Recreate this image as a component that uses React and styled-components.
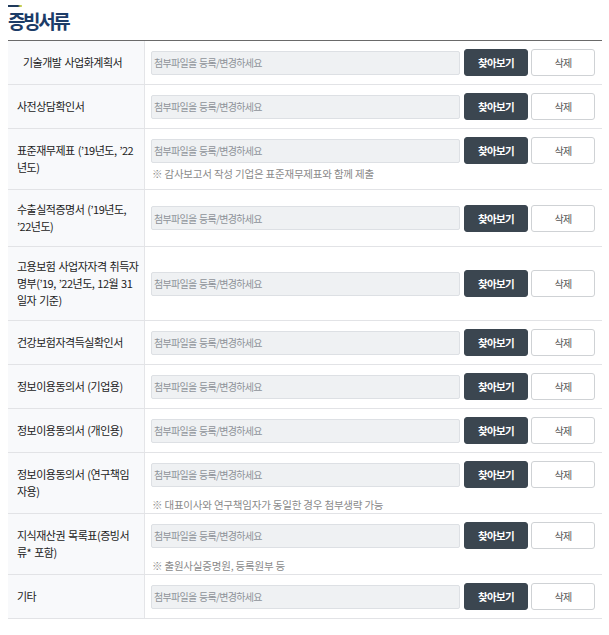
import React from "react";
import styled, { createGlobalStyle } from "styled-components";

const GlobalStyle = createGlobalStyle`
  html, body { margin: 0; padding: 0; background: #ffffff; }
  body { font-family: "Noto Sans CJK KR", "Noto Sans", sans-serif; color: #222; }
  * { box-sizing: border-box; }
`;

const Page = styled.div`
  padding: 5px 7px 0 8px;
`;

const TitleBar = styled.div`
  width: 14px;
  height: 2px;
  background: linear-gradient(to right, #1f3a5c 0, #1f3a5c 10px, #b9c64a 12px, #d8dc7a 14px);
`;

const Title = styled.h2`
  margin: 2px 0 7px;
  font-size: 19px;
  line-height: 24px;
  font-weight: 700;
  letter-spacing: -2.4px;
  color: #1c3c68;
`;

const Table = styled.div`
  border-top: 1px solid #6a6a6a;
`;

const Row = styled.div`
  display: grid;
  grid-template-columns: 137px 1fr;
  border-bottom: 1px solid #e2e3e6;
`;

const LabelCell = styled.div`
  display: flex;
  align-items: center;
  padding: 11px 4px 11px ${(p) => (p.$indent ? 15 : 9)}px;
  background: #f8f9fb;
  border-right: 1px solid #e4e5e8;
  font-size: 11px;
  line-height: 17px;
  letter-spacing: -0.5px;
  word-spacing: 1px;
  color: #222;
  white-space: nowrap;
`;

const ContentCell = styled.div`
  display: flex;
  flex-direction: column;
  justify-content: center;
  padding: 8px 7px ${(p) => (p.$far ? 1 : 8)}px 6px;
`;

const Field = styled.div`
  display: flex;
  align-items: center;
  height: 27px;
`;

const FileInput = styled.input`
  flex: 1;
  min-width: 0;
  height: 24px;
  margin-right: 4px;
  padding: 0 0 0 2px;
  border: 1px solid #dde0e4;
  border-radius: 2px;
  background: #eff1f3;
  font-family: "Noto Sans CJK KR", sans-serif;
  font-size: 10px;
  letter-spacing: -0.7px;
  word-spacing: 1px;
  color: #333;
  outline: none;
  &::placeholder { color: #8e9399; }
`;

const Button = styled.button`
  width: 64px;
  height: 27px;
  padding: 0;
  border-radius: 3px;
  font-family: "Noto Sans CJK KR", sans-serif;
  letter-spacing: -0.6px;
  cursor: pointer;
  border: 1px solid ${(p) => (p.$primary ? "#3b4650" : "#cfd2d5")};
  background: ${(p) => (p.$primary ? "#3b4650" : "#ffffff")};
  color: ${(p) => (p.$primary ? "#ffffff" : "#555")};
  font-size: ${(p) => (p.$primary ? 10.5 : 10)}px;
  font-weight: ${(p) => (p.$primary ? 700 : 400)};
  & + & { margin-left: 3px; }
`;

const Note = styled.div`
  margin-top: ${(p) => (p.$far ? 10 : 3)}px;
  padding-left: 1px;
  font-size: 10.5px;
  line-height: 14px;
  letter-spacing: -0.2px;
  color: #8a8a8a;
  white-space: nowrap;
`;

const rows = [
  { label: ["기술개발 사업화계획서"], indent: true },
  { label: ["사전상담확인서"] },
  {
    label: ["표준재무제표 (’19년도, ’22", "년도)"],
    note: "※ 감사보고서 작성 기업은 표준재무제표와 함께 제출",
  },
  { label: ["수출실적증명서 (’19년도,", "’22년도)"] },
  { label: ["고용보험 사업자자격 취득자", "명부(’19, ’22년도, 12월 31", "일자 기준)"] },
  { label: ["건강보험자격득실확인서"] },
  { label: ["정보이용동의서 (기업용)"] },
  { label: ["정보이용동의서 (개인용)"] },
  {
    label: ["정보이용동의서 (연구책임", "자용)"],
    note: "※ 대표이사와 연구책임자가 동일한 경우 첨부생략 가능",
    far: true,
  },
  {
    label: ["지식재산권 목록표(증빙서", "류* 포함)"],
    note: "※ 출원사실증명원, 등록원부 등",
    far: true,
  },
  { label: ["기타"] },
];

export default function App() {
  return (
    <>
      <GlobalStyle />
      <Page>
        <TitleBar />
        <Title>증빙서류</Title>
        <Table>
          {rows.map((r, i) => (
            <Row key={i}>
              <LabelCell $indent={r.indent}>
                <div>
                  {r.label.map((l, j) => (
                    <React.Fragment key={j}>
                      {j > 0 && <br />}
                      {l}
                    </React.Fragment>
                  ))}
                </div>
              </LabelCell>
              <ContentCell $far={r.far}>
                <Field>
                  <FileInput readOnly placeholder="첨부파일을 등록/변경하세요" />
                  <Button $primary>찾아보기</Button>
                  <Button>삭제</Button>
                </Field>
                {r.note && <Note $far={r.far}>{r.note}</Note>}
              </ContentCell>
            </Row>
          ))}
        </Table>
      </Page>
    </>
  );
}
